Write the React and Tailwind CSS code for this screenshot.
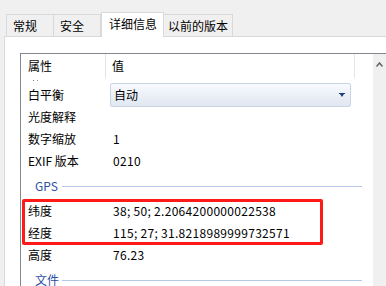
import React from "react";

const font = { fontFamily: '"Noto Sans CJK SC", "Noto Sans", sans-serif' };

function Row({ label, value }) {
  return (
    <div className="flex h-[22px] items-center text-[12px] text-black">
      <div className="w-[85px] pl-[7px] whitespace-nowrap">{label}</div>
      <div className="pl-[7px] whitespace-nowrap tracking-[0.3px]">{value}</div>
    </div>
  );
}

function Group({ label }) {
  return (
    <div className="flex h-[28px] items-center text-[12px] text-[#2c4fa6]">
      <div className="w-[41px] pl-[14px] whitespace-nowrap">{label}</div>
      <div className="h-px w-[300px] bg-[#b7c5e6]" />
    </div>
  );
}

export default function App() {
  return (
    <div
      className="relative h-[286px] w-[386px] overflow-hidden bg-[#f0f0f0]"
      style={font}
    >
      {/* Tabs */}
      <div className="flex h-[36px] items-end pl-[6px] text-[12px] text-black">
        <div className="flex h-[22px] w-[48px] items-center border border-b-0 border-[#d9d9d9] bg-[#f0f0f0] pl-[6px]">
          常规
        </div>
        <div className="flex h-[22px] w-[47px] items-center border border-b-0 border-l-0 border-[#d9d9d9] bg-[#f0f0f0] pl-[6px]">
          安全
        </div>
        <div className="relative z-10 -mb-px flex h-[25px] w-[63px] items-center border border-b-0 border-[#d9d9d9] bg-white pl-[7px] pb-[2px]">
          详细信息
        </div>
        <div className="flex h-[22px] w-[69px] items-center border border-b-0 border-l-0 border-[#d9d9d9] bg-[#f0f0f0] pl-[4px]">
          以前的版本
        </div>
      </div>

      {/* Panel */}
      <div className="ml-[4px] h-[250px] border-l border-t border-[#d9d9d9] bg-white pl-[15px] pt-[16px]">
        <div className="flex h-[240px] border-l border-t border-[#828790]">
          <div className="w-[352px]">
            {/* Header */}
            <div className="flex h-[24px] items-center text-[12px] text-black">
              <div className="flex h-full w-[85px] items-center border-r border-[#e5e5e5] pl-[7px]">
                属性
              </div>
              <div className="flex h-full w-[249px] items-center border-r border-[#e5e5e5] pl-[6px]">
                值
              </div>
            </div>
            {/* clipped row remnants */}
            <div className="flex h-[6px] gap-[3px] pl-[12px] pt-[2px]">
              <div className="h-px w-px bg-[#777]" />
              <div className="h-px w-px bg-[#999]" />
            </div>
            {/* White balance with dropdown */}
            <div className="flex h-[22px] items-center text-[12px] text-black">
              <div className="w-[85px] pl-[7px]">白平衡</div>
              <div className="ml-[4px] flex h-[24px] w-[241px] items-center justify-between rounded-[2px] border border-[#c8d4e6] bg-gradient-to-b from-[#f8fafd] to-[#e0e7f1] pl-[3px] pr-[5px]">
                <span>自动</span>
                <svg width="6" height="4" viewBox="0 0 6 4">
                  <rect x="0" y="0" width="6" height="1" fill="#1d3a7c" />
                  <path d="M1 1 L5 1 L3 4 Z" fill="#1d3a7c" />
                </svg>
              </div>
            </div>
            <Row label="光度解释" value="" />
            <Row label="数字缩放" value="1" />
            <Row label="EXIF 版本" value="0210" />
            <Group label="GPS" />
            <Row label="纬度" value="38; 50; 2.2064200000022538" />
            <Row label="经度" value="115; 27; 31.8218989999732571" />
            <Row label="高度" value="76.23" />
            <Group label="文件" />
          </div>
          {/* Scrollbar */}
          <div className="flex w-[13px] justify-center bg-[#f0f0f0] pt-[8px]">
            <svg width="7" height="5" viewBox="0 0 7 5">
              <path d="M0.5 4.5 L3.5 1 L6.5 4.5" fill="none" stroke="#606060" strokeWidth="1.5" />
            </svg>
          </div>
        </div>
      </div>

      {/* Red annotation box */}
      <div className="absolute left-[22px] top-[199px] h-[46px] w-[301px] rounded-[2px] border-[3px] border-[#ff1a1a]" />
    </div>
  );
}
